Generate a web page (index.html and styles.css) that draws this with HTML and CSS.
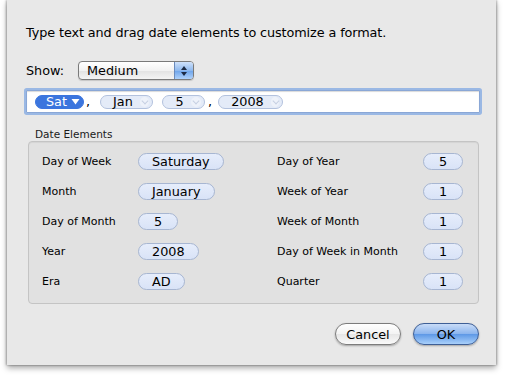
FILE: index.html
```html
<!DOCTYPE html>
<html>
<head>
<meta charset="utf-8">
<link rel="stylesheet" href="styles.css">
</head>
<body>
<div class="sheet">
  <p class="intro">Type text and drag date elements to customize a format.</p>
  <div class="show-row">
    <span class="show-label">Show:</span>
    <div class="popup">
      <span class="popup-text">Medium</span>
      <span class="popup-arrows">
        <svg width="8" height="12" viewBox="0 0 8 12"><path d="M4 1 L7 5 L1 5 Z M4 11 L7 7 L1 7 Z" fill="#1c2a44"/></svg>
      </span>
    </div>
  </div>
  <div class="token-field">
    <span class="token selected t-sat">Sat<svg class="caret" width="9" height="7" viewBox="0 0 9 7"><path d="M0.5 1 L8.5 1 L4.5 6.5 Z" fill="#fff"/></svg></span>
    <span class="sep s1">,</span>
    <span class="token t-jan">Jan<span class="chev"></span></span>
    <span class="token t-day">5<span class="chev"></span></span>
    <span class="sep s2">,</span>
    <span class="token t-year">2008<span class="chev"></span></span>
  </div>
  <div class="group-label">Date Elements</div>
  <div class="group">
    <div class="col">
      <div class="row"><span class="lbl">Day of Week</span><span class="pill">Saturday</span></div>
      <div class="row"><span class="lbl">Month</span><span class="pill">January</span></div>
      <div class="row"><span class="lbl">Day of Month</span><span class="pill">5</span></div>
      <div class="row"><span class="lbl">Year</span><span class="pill">2008</span></div>
      <div class="row"><span class="lbl">Era</span><span class="pill">AD</span></div>
    </div>
    <div class="col right">
      <div class="row"><span class="lbl">Day of Year</span><span class="pill">5</span></div>
      <div class="row"><span class="lbl">Week of Year</span><span class="pill">1</span></div>
      <div class="row"><span class="lbl">Week of Month</span><span class="pill">1</span></div>
      <div class="row"><span class="lbl">Day of Week in Month</span><span class="pill">1</span></div>
      <div class="row"><span class="lbl">Quarter</span><span class="pill">1</span></div>
    </div>
  </div>
  <div class="buttons">
    <button class="btn cancel">Cancel</button>
    <button class="btn ok">OK</button>
  </div>
</div>
</body>
</html>
```
FILE: styles.css
```css
html, body {
  margin: 0;
  padding: 0;
  background: #ffffff;
}
body {
  font-family: "DejaVu Sans", "Liberation Sans", sans-serif;
  color: #000;
  width: 506px;
  height: 376px;
  overflow: hidden;
}
.sheet {
  margin-left: 7px;
  width: 489px;
  height: 365px;
  box-sizing: border-box;
  background: #e8e8e8;
  padding: 0 16px 0 19px;
  box-shadow: -1px 0 2px rgba(0,0,0,0.25), 1px 0 2px rgba(0,0,0,0.25), 0 3px 6px rgba(0,0,0,0.35);
}
.intro {
  margin: 0;
  padding-top: 25px;
  font-size: 12.8px;
  line-height: 16px;
  letter-spacing: -0.1px;
}
.show-row {
  display: flex;
  align-items: center;
  margin-top: 20px;
  height: 19px;
}
.show-label {
  font-size: 12.8px;
  width: 52px;
}
.popup {
  width: 116px;
  height: 19px;
  box-sizing: border-box;
  border: 1px solid #7a7a7a;
  border-radius: 4px;
  background: linear-gradient(#ffffff, #f2f2f2 50%, #e2e2e2 51%, #f4f4f4);
  display: flex;
  align-items: center;
  overflow: hidden;
  box-shadow: 0 1px 1px rgba(0,0,0,0.15);
}
.popup-text {
  flex: 1;
  font-size: 12.8px;
  padding-left: 8px;
}
.popup-arrows {
  width: 18px;
  height: 100%;
  display: flex;
  align-items: center;
  justify-content: center;
  background: linear-gradient(#cfe2fb, #8fb9ee 50%, #6da4ea 51%, #aed1fb);
  border-left: 1px solid #6a8bbd;
}
.token-field {
  margin-top: 10px;
  height: 23px;
  width: 454px;
  box-sizing: border-box;
  background: #fff;
  border: 1px solid #8aa7d6;
  box-shadow: 0 0 0 2px #9ab8e4, inset 0 1px 1px rgba(0,0,0,0.15);
  border-radius: 1px;
  display: flex;
  align-items: center;
  padding-left: 8px;
  font-size: 12.8px;
}
.token {
  display: inline-flex;
  align-items: center;
  justify-content: center;
  height: 14px;
  box-sizing: border-box;
  border: 1px solid #b3c2de;
  border-radius: 8px;
  background: #e4ebf8;
  padding: 0 3px 0 12px;
  line-height: 12px;
}
.token.selected {
  background: #3b75de;
  border-color: #3b75de;
  color: #fff;
  padding: 0 3px 0 10px;
}
.t-sat { width: 49px; }
.t-jan { width: 53px; margin-left: 10px; }
.t-day { width: 43px; margin-left: 9px; }
.t-year { width: 65px; margin-left: 6px; }
.s1 { margin-left: 2px; }
.s2 { margin-left: 3px; }
.caret {
  margin-left: 4px;
}
.chev {
  display: inline-block;
  width: 10px;
  height: 10px;
  margin-left: 7px;
  border-radius: 50%;
  background: #eef2fa;
  position: relative;
}
.chev::after {
  content: "";
  position: absolute;
  left: 2px;
  top: 2px;
  width: 4px;
  height: 4px;
  border-right: 1px solid #c6d0e2;
  border-bottom: 1px solid #c6d0e2;
  transform: translate(0.5px, -0.5px) rotate(45deg);
}
.group-label {
  font-size: 10.5px;
  margin-top: 14px;
  padding-left: 9px;
  height: 14px;
  line-height: 14px;
  color: #1a1a1a;
}
.group {
  margin-top: 0;
  margin-left: 2px;
  width: 451px;
  height: 163px;
  box-sizing: border-box;
  border: 1px solid #c4c4c4;
  border-radius: 4px;
  background: #e1e1e1;
  display: grid;
  grid-template-columns: 235px 1fr;
  padding: 4px 15px 0 13px;
  box-shadow: inset 0 1px 1px rgba(0,0,0,0.06);
}
.col {
  display: flex;
  flex-direction: column;
}
.row {
  height: 30px;
  display: flex;
  align-items: center;
}
.lbl {
  font-size: 11px;
  width: 96px;
}
.right .lbl {
  width: auto;
  flex: 1;
}
.pill {
  display: inline-flex;
  align-items: center;
  justify-content: center;
  height: 17px;
  min-width: 40px;
  box-sizing: border-box;
  padding: 0 13px;
  border: 1px solid #a7b6d2;
  border-radius: 9px;
  background: linear-gradient(#e6edfb, #d9e3f7);
  font-size: 12.8px;
  line-height: 15px;
}
.buttons {
  display: flex;
  justify-content: flex-end;
  gap: 12px;
  margin-top: 19px;
  padding-right: 1px;
}
.btn {
  font-family: "DejaVu Sans", "Liberation Sans", sans-serif;
  font-size: 12.8px;
  height: 22px;
  width: 66px;
  border-radius: 11px;
  padding: 0;
  color: #000;
  box-shadow: 0 1px 2px rgba(0,0,0,0.3);
}
.cancel {
  border: 1px solid #7c7c7c;
  background: linear-gradient(#ffffff, #f3f3f3 50%, #e6e6e6 51%, #fafafa);
}
.ok {
  border: 1px solid #3e5f96;
  background: linear-gradient(#c9dcf7, #8ab4ee 50%, #5d98e6 51%, #a9d0fb);
}
```
